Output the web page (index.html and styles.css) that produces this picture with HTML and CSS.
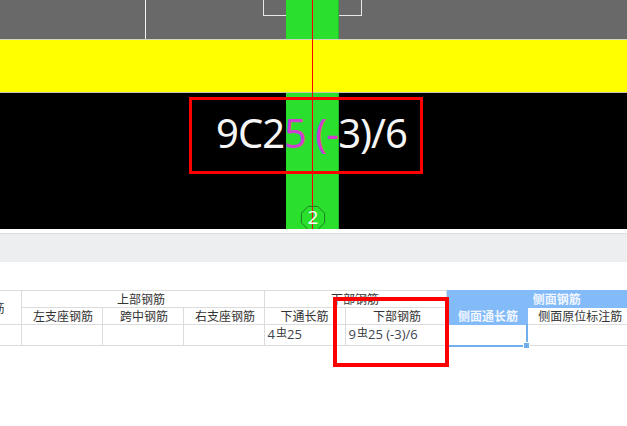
FILE: index.html
```html
<!DOCTYPE html>
<html lang="zh">
<head>
<meta charset="utf-8">
<title>钢筋平法表格</title>
<link rel="stylesheet" href="styles.css">
</head>
<body>
<section class="canvas">
  <div class="band-gray"></div>
  <div class="band-yellow"></div>
  <div class="band-black"></div>
  <div class="white-line"></div>
  <div class="white-rect"></div>
  <div class="strip"></div>
  <div class="big-text">9C2<span class="magenta">5 (-</span>3)/6</div>
  <div class="axis-line"></div>
  <svg class="octagon" width="26" height="26" viewBox="0 0 26 26"><polygon points="8.2,1.4 17.8,1.4 24.6,8.2 24.6,17.8 17.8,24.6 8.2,24.6 1.4,17.8 1.4,8.2"/></svg>
  <div class="axis-num">2</div>
  <div class="callout callout-top"></div>
</section>
<div class="toolbar"></div>
<section class="table-area">
  <table class="grid">
    <colgroup>
      <col class="c0"><col class="c1"><col class="c1"><col class="c1"><col class="c1"><col class="c2"><col class="c1"><col class="c3">
    </colgroup>
    <tr class="r1">
      <th rowspan="2" class="clip"><div class="clip-in">钢筋</div></th>
      <th colspan="3" class="nudge-left">上部钢筋</th>
      <th colspan="2">下部钢筋</th>
      <th colspan="2" class="blue blue-head">侧面钢筋</th>
    </tr>
    <tr class="r2">
      <th class="nudge-right">左支座钢筋</th>
      <th class="nudge-right">跨中钢筋</th>
      <th class="nudge-right">右支座钢筋</th>
      <th>下通长筋</th>
      <th class="nudge-right">下部钢筋</th>
      <th class="blue nudge-right">侧面通长筋</th>
      <th class="nudge-right wide">侧面原位标注筋</th>
    </tr>
    <tr class="r3">
      <td></td><td></td><td></td><td></td>
      <td>4<span class="rebar">虫</span>25</td>
      <td>9<span class="rebar">虫</span>25 (-3)/6</td>
      <td class="selected"><i class="handle"></i></td>
      <td></td>
    </tr>
  </table>
  <div class="callout callout-bottom"></div>
</section>
</body>
</html>
```
FILE: styles.css
```css
html, body { margin: 0; padding: 0; background: #fff; }
body { width: 627px; height: 426px; overflow: hidden; font-family: "Noto Sans CJK SC", "Noto Sans", sans-serif; }

.canvas { position: relative; height: 229px; overflow: hidden; background: #000; }
.band-gray { height: 39px; background: #696969; }
.band-yellow { position: relative; z-index: 1; height: 52px; background: #ffff00; border-top: 1px solid #d4d4c0; border-bottom: 1px solid #c8c8b0; }
.band-black { height: 136px; background: #000; }

.white-line { position: absolute; left: 145px; top: 0; width: 1px; height: 39px; background: #f4f4f4; }
.white-rect { position: absolute; left: 263px; top: -2px; width: 97px; height: 16px; border: 1px solid #e8e8e8; }
.strip { position: absolute; left: 286px; top: 0; width: 52px; height: 229px; background: #2ae02c; border-right: 1px solid #27b52a; }
.axis-line { position: absolute; z-index: 2; left: 312px; top: 0; width: 1px; height: 229px; background: #ff0000; }
.big-text { position: absolute; z-index: 3; left: 216px; top: 107px; font: 400 40px/52px "Noto Sans", "Open Sans", sans-serif; letter-spacing: -1px; color: #f6f6f6; white-space: nowrap; }
.magenta { color: #cf3fcf; }
.octagon { position: absolute; z-index: 3; left: 300px; top: 205px; }
.octagon polygon { fill: none; stroke: #1d7d24; stroke-width: 1; }
.axis-num { position: absolute; z-index: 4; left: 300px; top: 204px; width: 26px; text-align: center; font: 400 19px/26px "Open Sans", "Noto Sans", sans-serif; color: #fff; }

.callout { position: absolute; z-index: 5; border: 3px solid #f00; box-sizing: border-box; }
.callout-top { left: 189px; top: 97px; width: 234px; height: 77px; }

.toolbar { height: 29px; margin-top: 4px; background: #edeef0; border-top: 1px solid #dcdcdc; box-sizing: border-box; }

.table-area { position: relative; height: 164px; padding-top: 28px; box-sizing: border-box; }
.callout-bottom { left: 333px; top: 35px; width: 116px; height: 70px; border-width: 4px; }

.grid { border-collapse: collapse; table-layout: fixed; width: 627px; font-size: 12px; line-height: 14px; color: #333; }
.c0 { width: 21px; }
.c1 { width: 81px; }
.c2 { width: 101px; }
.c3 { width: 100px; }
.grid th, .grid td { border: 1px solid #dcdcdc; padding: 0; font-weight: 400; text-align: center; overflow: hidden; white-space: nowrap; }
.grid tr > :first-child { border-left: 0; }
.grid tr > :last-child { border-right: 0; }
.r1 { height: 17px; }
.r2 { height: 17px; }
.r3 { height: 21px; }
.grid th.nudge-left { padding-right: 3px; }
.grid th.nudge-right { padding-left: 3px; }
.grid th.wide { padding-left: 6px; }
.grid td { text-align: left; padding: 0 0 2px 3px; color: #3c4450; font-family: "Open Sans", "Noto Sans CJK SC", sans-serif; font-size: 13px; }
.clip-in { display: flex; justify-content: flex-end; padding-right: 16px; }
.grid th.blue { background: #82bbf8; color: #f2f7ff; border-color: #82bbf8; font-weight: 700; }
.grid th.blue-head { padding-left: 40px; }
.rebar { font-size: 11px; position: relative; top: -2px; font-family: "Noto Sans CJK SC", sans-serif; margin: 0 0 0 1px; color: #333; }
.grid td.selected { position: relative; overflow: visible; border: 0; border-right: 2px solid #70aeee; border-bottom: 2px solid #70aeee; }
.handle { position: absolute; right: -4px; bottom: -4px; width: 5px; height: 5px; background: #70aeee; border: 1px solid #fff; box-sizing: content-box; }
```
